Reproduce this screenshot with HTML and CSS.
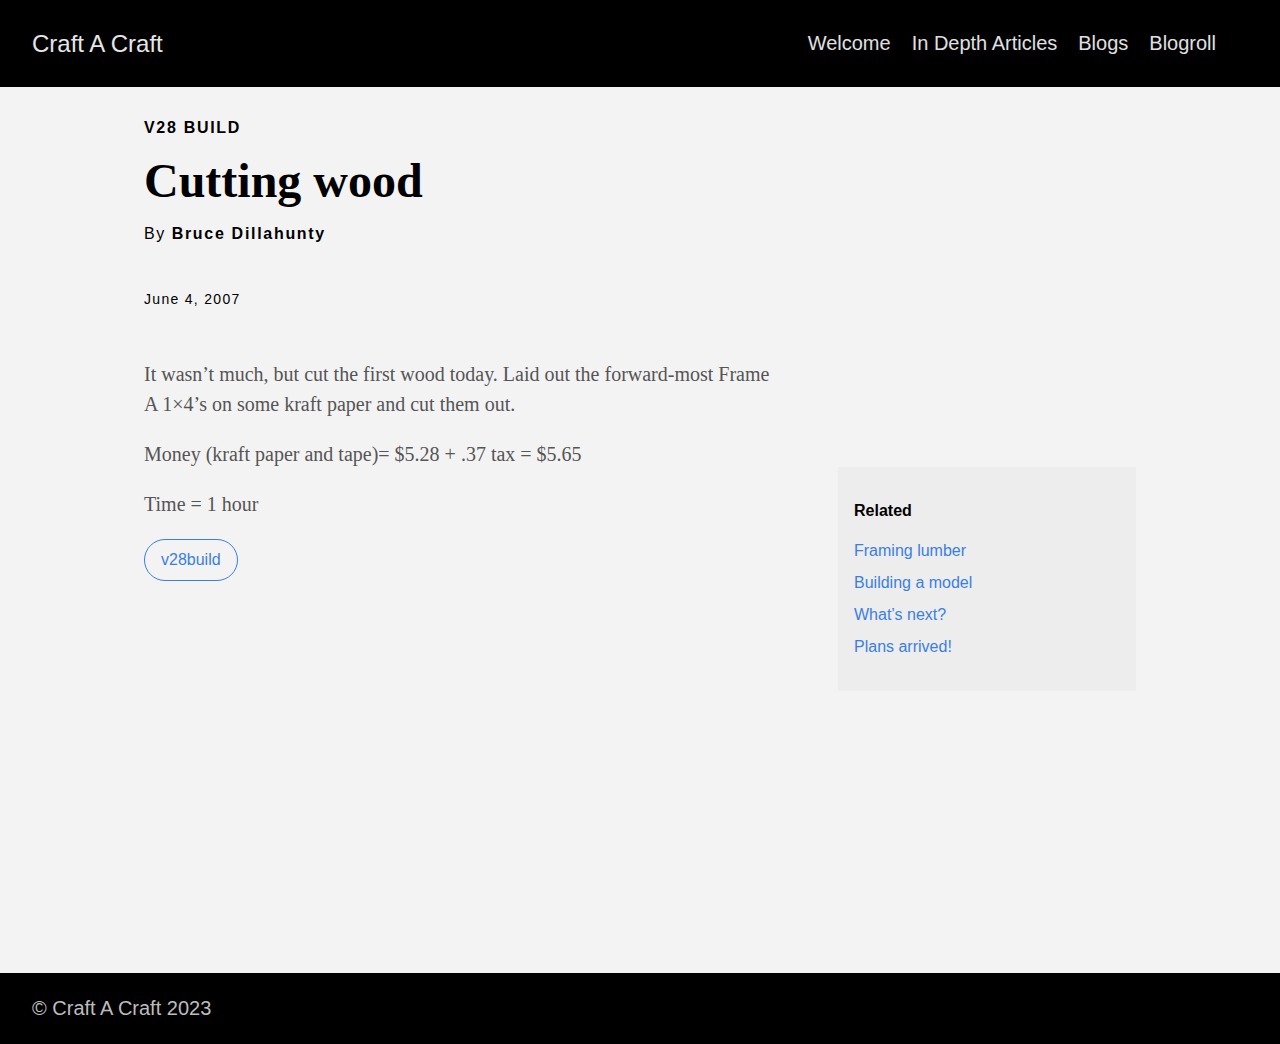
FILE: index.html
```html
<!DOCTYPE html>
<html lang="en">
<head>
<meta charset="utf-8">
<title>Cutting wood – Craft A Craft</title>
<link rel="stylesheet" href="styles.css">
</head>
<body>
<div class="page">
  <header class="site-header">
    <a class="logo" href="#">Craft A Craft</a>
    <nav class="nav">
      <a href="#">Welcome</a>
      <a href="#">In Depth Articles</a>
      <a href="#">Blogs</a>
      <a href="#">Blogroll</a>
    </nav>
  </header>
  <main class="main">
    <div class="layout">
      <article class="post">
        <div class="category">V28 BUILD</div>
        <h1 class="title">Cutting wood</h1>
        <div class="byline">By <strong>Bruce Dillahunty</strong></div>
        <div class="date">June 4, 2007</div>
        <div class="body">
          <p>It wasn’t much, but cut the first wood today. Laid out the forward-most Frame A 1×4’s on some kraft paper and cut them out.</p>
          <p>Money (kraft paper and tape)= $5.28 + .37 tax = $5.65</p>
          <p>Time = 1 hour</p>
        </div>
        <div class="tags"><a class="tag" href="#">v28build</a></div>
      </article>
      <aside class="sidebar">
        <div class="related">
          <h3>Related</h3>
          <ul>
            <li><a href="#">Framing lumber</a></li>
            <li><a href="#">Building a model</a></li>
            <li><a href="#">What’s next?</a></li>
            <li><a href="#">Plans arrived!</a></li>
          </ul>
        </div>
      </aside>
    </div>
  </main>
  <footer class="site-footer">© Craft A Craft 2023</footer>
</div>
</body>
</html>
```
FILE: styles.css
```css
* { box-sizing: border-box; }
html, body { margin: 0; padding: 0; }
body {
  background: #f3f3f3;
  font-family: "Liberation Sans", Arial, sans-serif;
  color: #000;
}
a { text-decoration: none; }
.page {
  min-height: 1044px;
  display: flex;
  flex-direction: column;
}
.site-header {
  background: #000;
  height: 87px;
  display: flex;
  align-items: center;
  justify-content: space-between;
  padding: 0 64px 0 32px;
}
.logo {
  color: #e6e6e6;
  font-size: 24px;
  line-height: 1;
}
.nav {
  display: flex;
  gap: 21px;
  margin-top: -2px;
}
.nav a {
  color: #e0e0e0;
  font-size: 20px;
  line-height: 1;
}
.main {
  flex: 1;
  padding: 0 144px;
}
.layout {
  display: grid;
  grid-template-columns: 1fr 298px;
  column-gap: 60px;
}
.post { padding-top: 32px; }
.category {
  font-size: 16px;
  font-weight: bold;
  letter-spacing: 1.7px;
  line-height: 18px;
}
.title {
  font-family: "Liberation Serif", "Times New Roman", serif;
  font-size: 48px;
  font-weight: bold;
  line-height: 56px;
  margin: 16px 0 0;
}
.byline {
  font-size: 16px;
  letter-spacing: 1.5px;
  line-height: 20px;
  margin-top: 15px;
}
.byline strong { letter-spacing: 1.7px; }
.date {
  font-size: 14px;
  letter-spacing: 1.3px;
  line-height: 18px;
  margin-top: 46px;
}
.body {
  margin-top: 51px;
  font-family: "Liberation Serif", "Times New Roman", serif;
  font-size: 20px;
  line-height: 30px;
  color: #555;
}
.body p { margin: 0 0 20px; }
.tags { margin-top: 20px; }
.tag {
  display: inline-block;
  height: 42px;
  line-height: 40px;
  padding: 0 16px;
  border: 1px solid #3b7fe0;
  border-radius: 21px;
  color: #3b7fe0;
  font-size: 16px;
}
.sidebar { padding-top: 380px; }
.related {
  background: #ededed;
  padding: 34px 16px 28px;
}
.related h3 {
  margin: 0 0 14px;
  font-size: 16px;
  font-weight: bold;
  line-height: 20px;
}
.related ul { list-style: none; margin: 0; padding: 0; }
.related li { line-height: 32px; }
.related a { color: #3b7fe0; font-size: 16px; }
.site-footer {
  background: #000;
  height: 71px;
  display: flex;
  align-items: center;
  padding: 0 32px;
  color: #bdbdbd;
  font-size: 20px;
}
```
